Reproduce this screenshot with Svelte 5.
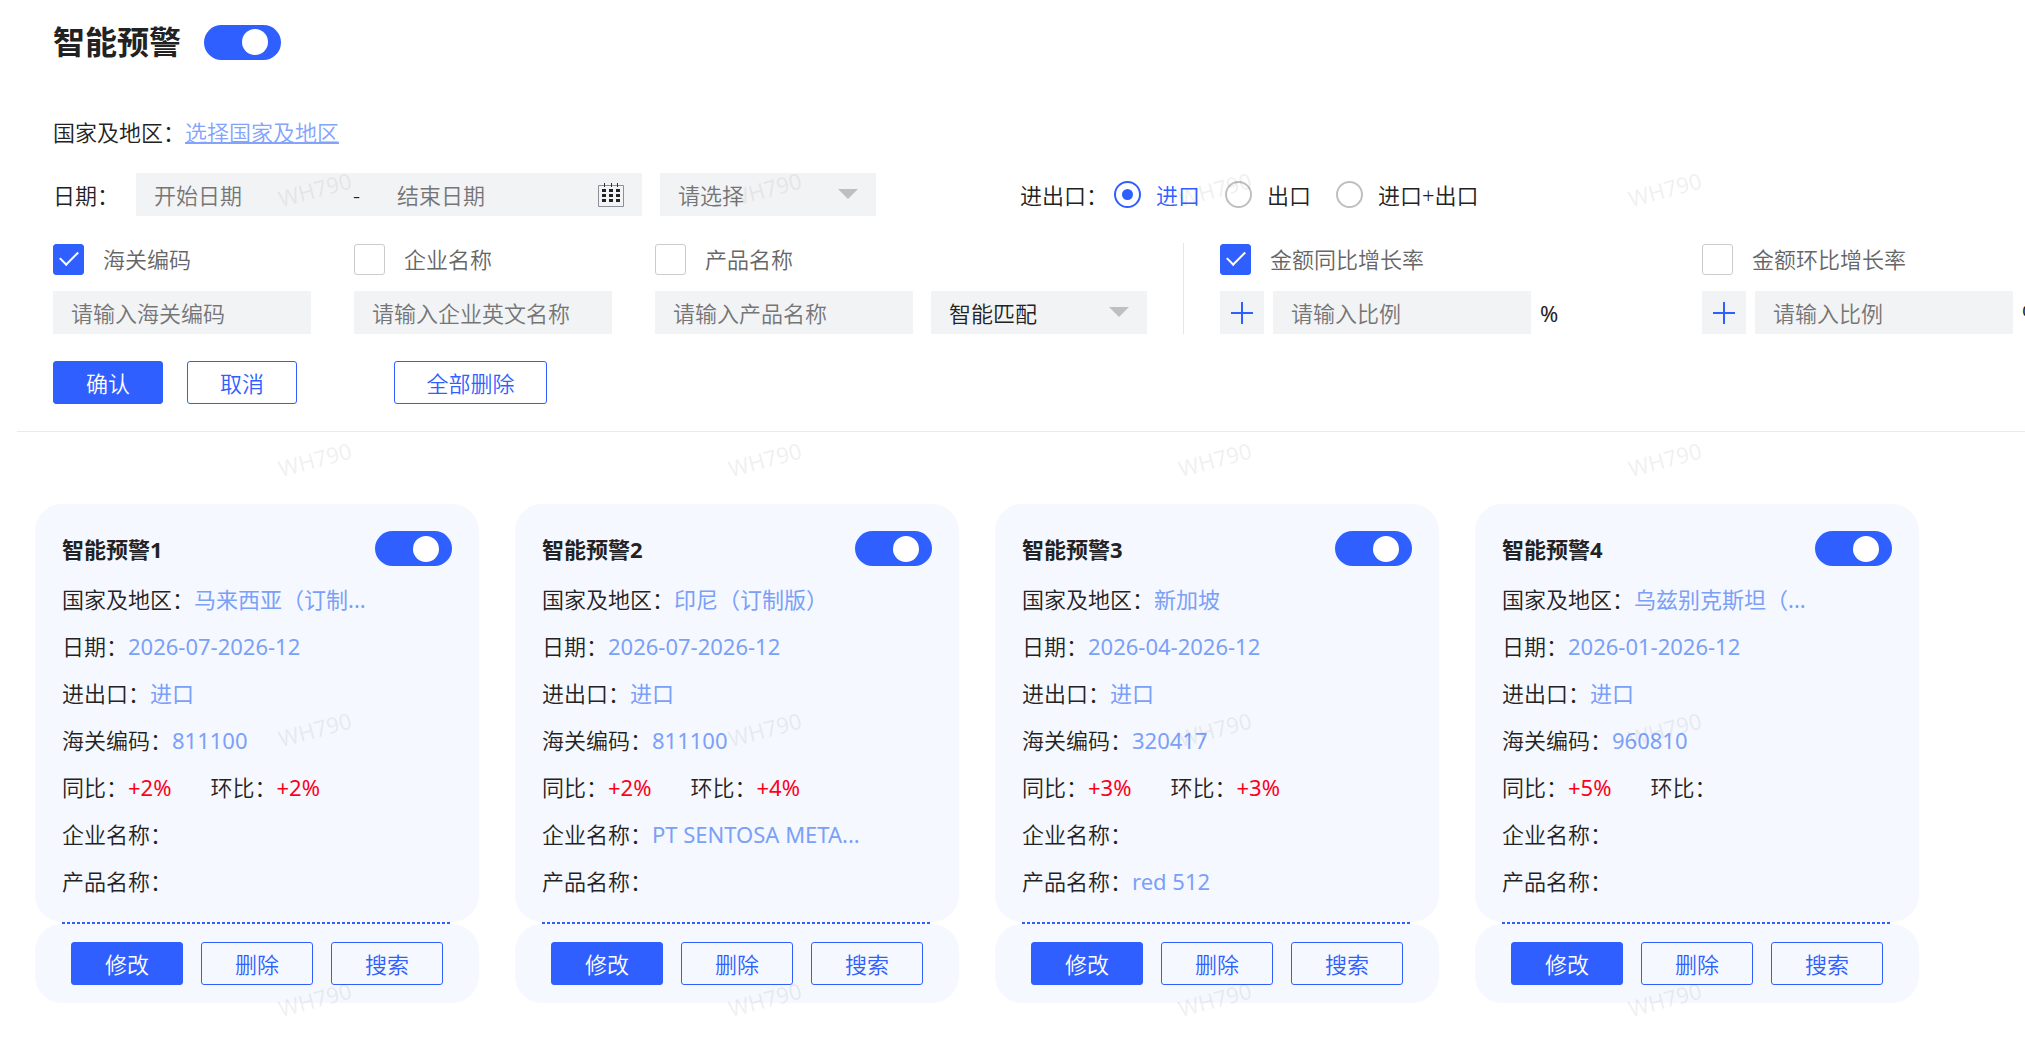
<script lang="ts">
	interface Filter {
		id: string;
		label: string;
		placeholder: string;
		checked: boolean;
	}

	interface Alert {
		name: string;
		enabled: boolean;
		country: string;
		date: string;
		direction: string;
		code: string;
		yoy: string;
		mom: string;
		company: string;
		product: string;
	}

	let enabled = $state(true);
	let direction = $state('进口');
	const directions = ['进口', '出口', '进口+出口'];

	let filters: Filter[] = $state([
		{ id: 'code', label: '海关编码', placeholder: '请输入海关编码', checked: true },
		{ id: 'company', label: '企业名称', placeholder: '请输入企业英文名称', checked: false },
		{ id: 'product', label: '产品名称', placeholder: '请输入产品名称', checked: false }
	]);

	let rates: Filter[] = $state([
		{ id: 'yoy', label: '金额同比增长率', placeholder: '请输入比例', checked: true },
		{ id: 'mom', label: '金额环比增长率', placeholder: '请输入比例', checked: false }
	]);

	let alerts: Alert[] = $state([
		{
			name: '智能预警1',
			enabled: true,
			country: '马来西亚（订制...',
			date: '2026-07-2026-12',
			direction: '进口',
			code: '811100',
			yoy: '+2%',
			mom: '+2%',
			company: '',
			product: ''
		},
		{
			name: '智能预警2',
			enabled: true,
			country: '印尼（订制版）',
			date: '2026-07-2026-12',
			direction: '进口',
			code: '811100',
			yoy: '+2%',
			mom: '+4%',
			company: 'PT SENTOSA META...',
			product: ''
		},
		{
			name: '智能预警3',
			enabled: true,
			country: '新加坡',
			date: '2026-04-2026-12',
			direction: '进口',
			code: '320417',
			yoy: '+3%',
			mom: '+3%',
			company: '',
			product: 'red 512'
		},
		{
			name: '智能预警4',
			enabled: true,
			country: '乌兹别克斯坦（...',
			date: '2026-01-2026-12',
			direction: '进口',
			code: '960810',
			yoy: '+5%',
			mom: '',
			company: '',
			product: ''
		}
	]);
</script>

{#snippet row(label: string, value: string)}
	<div class="row"><dt>{label}：</dt><dd>{value}</dd></div>
{/snippet}

{#snippet caret()}
	<svg class="caret" viewBox="0 0 20 10" aria-hidden="true"><path d="M0 0h20L10 10z" fill="#bfbfbf" /></svg>
{/snippet}

<main class="page">
	<section class="settings">
		<header class="title-bar">
			<h1>智能预警</h1>
			<input class="switch" type="checkbox" role="switch" aria-label="智能预警" bind:checked={enabled} />
		</header>

		<div class="country">
			国家及地区：<a href="#country">选择国家及地区</a>
		</div>

		<div class="date-row">
			<label class="date-label" for="start-date">日期：</label>
			<div class="date-range">
				<input id="start-date" type="text" placeholder="开始日期" />
				<span class="dash">-</span>
				<input type="text" placeholder="结束日期" aria-label="结束日期" />
				<svg class="calendar" viewBox="0 0 26 24" aria-hidden="true">
					<path d="M.5 2.5h25v21h-25z" fill="none" stroke="#8a8f99" />
					<path d="M6.5 0v4M13.5 0v4M19.5 0v4" stroke="#333" />
					<path
						d="M4 6h4v3h-4zM11 6h4v3h-4zM18 6h4v3h-4zM4 11h4v3h-4zM11 11h4v3h-4zM18 11h4v3h-4zM4 16h4v3h-4zM11 16h4v3h-4zM18 16h4v3h-4z"
						fill="#222"
					/>
				</svg>
			</div>
			<div class="select muted">
				<select aria-label="日期范围">
					<option>请选择</option>
				</select>
				{@render caret()}
			</div>
			<fieldset class="directions">
				<legend class="sr-only">进出口</legend>
				<span class="direction-label">进出口：</span>
				{#each directions as item (item)}
					<label class="radio" class:selected={direction === item}>
						<input type="radio" name="direction" value={item} bind:group={direction} />
						{item}
					</label>
				{/each}
			</fieldset>
		</div>

		<div class="filters">
			{#each filters as filter (filter.id)}
				<div class="filter">
					<label class="check">
						<input type="checkbox" bind:checked={filter.checked} />
						{filter.label}
					</label>
					<div class="controls">
						<input class="field" type="text" placeholder={filter.placeholder} aria-label={filter.label} />
						{#if filter.id === 'product'}
							<div class="select">
								<select aria-label="匹配方式">
									<option>智能匹配</option>
								</select>
								{@render caret()}
							</div>
						{/if}
					</div>
				</div>
			{/each}
			<div class="rates">
				{#each rates as rate (rate.id)}
					<div class="filter">
						<label class="check">
							<input type="checkbox" bind:checked={rate.checked} />
							{rate.label}
						</label>
						<div class="controls rate">
							<button class="sign" type="button" aria-label="正负号">
								<svg viewBox="0 0 22 22" aria-hidden="true">
									<path d="M11 0v22M0 11h22" stroke="#305fff" stroke-width="2" />
								</svg>
							</button>
							<input class="field" type="text" placeholder={rate.placeholder} aria-label={rate.label} />
							<span class="unit">%</span>
						</div>
					</div>
				{/each}
			</div>
		</div>

		<div class="actions">
			<button class="btn primary" type="button">确认</button>
			<button class="btn" type="button">取消</button>
			<button class="btn wide" type="button">全部删除</button>
		</div>
	</section>

	<section class="cards">
		{#each alerts as alert (alert.name)}
			<article>
				<div class="card-body">
					<div class="card-head">
						<h2>{alert.name}</h2>
						<input
							class="switch"
							type="checkbox"
							role="switch"
							aria-label={alert.name}
							bind:checked={alert.enabled}
						/>
					</div>
					<dl>
						{@render row('国家及地区', alert.country)}
						{@render row('日期', alert.date)}
						{@render row('进出口', alert.direction)}
						{@render row('海关编码', alert.code)}
						<div class="growth">
							{@render row('同比', alert.yoy)}
							{@render row('环比', alert.mom)}
						</div>
						{@render row('企业名称', alert.company)}
						{@render row('产品名称', alert.product)}
					</dl>
				</div>
				<div class="divider"></div>
				<div class="card-actions">
					<button class="btn primary" type="button">修改</button>
					<button class="btn" type="button">删除</button>
					<button class="btn" type="button">搜索</button>
				</div>
			</article>
		{/each}
	</section>

	<svg class="watermark" aria-hidden="true">
		<defs>
			<pattern id="mark" width="450" height="270" patternUnits="userSpaceOnUse">
				<text x="315" y="198" text-anchor="middle" transform="rotate(-15 315 190)">WH790</text>
			</pattern>
		</defs>
		<rect width="100%" height="100%" fill="url(#mark)" />
	</svg>
</main>

<style>
	:global(body) {
		background: #fff;
	}

	.page {
		--blue: #305fff;
		--field: #f1f3f5;
		position: relative;
		box-sizing: border-box;
		min-height: 100vh;
		padding-bottom: 48px;
		overflow: hidden;
		color: #222;
		font-family: 'Noto Sans', 'Noto Sans CJK SC', sans-serif;
		font-size: 22px;
		font-weight: 350;
		line-height: 30px;
	}

	.page *,
	.page *::before {
		box-sizing: border-box;
	}

	input,
	select,
	button {
		margin: 0;
		border: 0;
		border-radius: 0;
		color: inherit;
		font: inherit;
	}

	.sr-only {
		position: absolute;
		width: 1px;
		height: 1px;
		overflow: hidden;
		clip-path: inset(50%);
	}

	.settings {
		margin-left: 17px;
		padding: 25px 0 27px 36px;
		border-bottom: 1px solid #ebebeb;
	}

	.title-bar {
		display: flex;
		align-items: center;
		gap: 23px;
		height: 34px;
	}

	h1,
	h2 {
		margin: 0;
		font-weight: 700;
	}

	h1 {
		font-size: 32px;
	}

	h2 {
		font-size: 22px;
	}

	.switch {
		appearance: none;
		display: flex;
		align-items: center;
		justify-content: flex-end;
		width: 77px;
		height: 35px;
		padding: 0 13px;
		border-radius: 18px;
		background: #c4c8d0;
		cursor: pointer;
	}

	.switch:not(:checked) {
		justify-content: flex-start;
	}

	.switch:checked {
		background: var(--blue);
	}

	.switch::before {
		content: '';
		width: 26px;
		height: 26px;
		border-radius: 50%;
		background: #fff;
	}

	.country {
		margin-top: 58px;
	}

	.country a {
		color: #83a3fd;
		text-decoration-thickness: 2px;
	}

	.date-row {
		display: flex;
		align-items: center;
		margin-top: 26px;
		white-space: nowrap;
	}

	.date-label {
		flex: none;
		width: 83px;
	}

	.date-range {
		display: flex;
		flex: none;
		align-items: center;
		width: 506px;
		height: 43px;
		padding: 0 18px;
		background: var(--field);
	}

	.date-range input {
		width: 199px;
		padding: 0;
		background: none;
	}

	.dash {
		width: 44px;
	}

	.calendar {
		width: 26px;
		height: 24px;
		margin-left: auto;
	}

	input::placeholder {
		color: #757575;
		opacity: 1;
	}

	.select {
		position: relative;
		flex: none;
		width: 216px;
		margin-left: 18px;
	}

	.select select {
		appearance: none;
		width: 100%;
		height: 43px;
		padding: 0 18px;
		background: var(--field);
	}

	.select.muted {
		color: #757575;
	}

	.caret {
		position: absolute;
		top: 16px;
		right: 18px;
		width: 20px;
		height: 10px;
		pointer-events: none;
	}

	.directions {
		display: flex;
		align-items: center;
		margin: 0 0 0 144px;
		padding: 0;
		border: 0;
	}

	.direction-label {
		width: 94px;
	}

	.radio {
		display: flex;
		align-items: center;
		gap: 15px;
		margin-right: 25px;
	}

	.radio.selected {
		color: var(--blue);
	}

	.radio input {
		appearance: none;
		display: grid;
		place-items: center;
		width: 27px;
		height: 27px;
		border: 2px solid #bfbfbf;
		border-radius: 50%;
	}

	.radio input:checked {
		border-color: var(--blue);
	}

	.radio input:checked::before {
		content: '';
		width: 11px;
		height: 11px;
		border-radius: 50%;
		background: var(--blue);
	}

	.filters {
		display: flex;
		gap: 43px;
		margin-top: 27px;
		white-space: nowrap;
	}

	.filter {
		flex: none;
	}

	.check {
		display: flex;
		align-items: center;
		gap: 19px;
		height: 32px;
		color: #666;
	}

	.check input {
		appearance: none;
		display: grid;
		place-items: center;
		width: 31px;
		height: 31px;
		border: 1px solid #ccc;
		border-radius: 3px;
		background: #fff;
	}

	.check input:checked {
		border-color: var(--blue);
		background: var(--blue);
	}

	.check input:checked::before {
		content: '';
		width: 18px;
		height: 10px;
		border: solid #fff;
		border-width: 0 0 2px 2px;
		translate: 0 -3px;
		rotate: -45deg;
	}

	.controls {
		display: flex;
		align-items: center;
		margin-top: 16px;
	}

	.field {
		width: 258px;
		height: 43px;
		padding: 0 18px;
		background: var(--field);
	}

	.rates {
		display: flex;
		flex: none;
		gap: 144px;
		margin-left: -7px;
		padding-left: 36px;
		border-left: 1px solid #e6e6e6;
	}

	.rate {
		gap: 9px;
		width: 338px;
	}

	.unit {
		font-weight: 400;
	}

	.sign {
		display: grid;
		flex: none;
		place-items: center;
		width: 44px;
		height: 43px;
		padding: 0;
		background: var(--field);
	}

	.sign svg {
		width: 22px;
		height: 22px;
	}

	.actions {
		display: flex;
		gap: 24px;
		margin-top: 27px;
	}

	.btn {
		width: 110px;
		height: 43px;
		padding: 0;
		border: 1px solid var(--blue);
		border-radius: 3px;
		background: none;
		color: var(--blue);
		cursor: pointer;
	}

	.btn.primary {
		background: var(--blue);
		color: #fff;
	}

	.btn.wide {
		width: 153px;
		margin-left: 73px;
	}

	.cards {
		display: grid;
		grid-template-columns: repeat(4, minmax(0, 1fr));
		gap: 36px;
		margin-top: 72px;
		padding: 0 106px 0 35px;
	}

	.card-body,
	.card-actions {
		border-radius: 27px;
		background: #f5f8ff;
	}

	.card-body {
		padding: 27px 27px 17px;
	}

	.card-head {
		display: flex;
		align-items: center;
		justify-content: space-between;
	}

	dl {
		margin: 10px 0 0;
		line-height: 47px;
		white-space: nowrap;
	}

	.row {
		display: flex;
	}

	dd {
		margin: 0;
		overflow: hidden;
		color: #7ba0f8;
		font-weight: 400;
		text-overflow: ellipsis;
	}

	.growth {
		display: flex;
		gap: 39px;
	}

	.growth dd {
		color: #ff0019;
	}

	.divider {
		height: 2px;
		margin: 0 27px;
		background: repeating-linear-gradient(90deg, var(--blue) 0 3px, transparent 3px 5px);
	}

	.card-actions {
		display: flex;
		gap: 18px;
		padding: 18px 36px;
	}

	.card-actions .btn {
		flex: 1;
	}

	.watermark {
		position: absolute;
		inset: 0;
		width: 100%;
		height: 100%;
		pointer-events: none;
	}

	.watermark text {
		fill: #000;
		fill-opacity: 0.06;
		font-size: 22px;
		font-weight: 400;
	}
</style>
